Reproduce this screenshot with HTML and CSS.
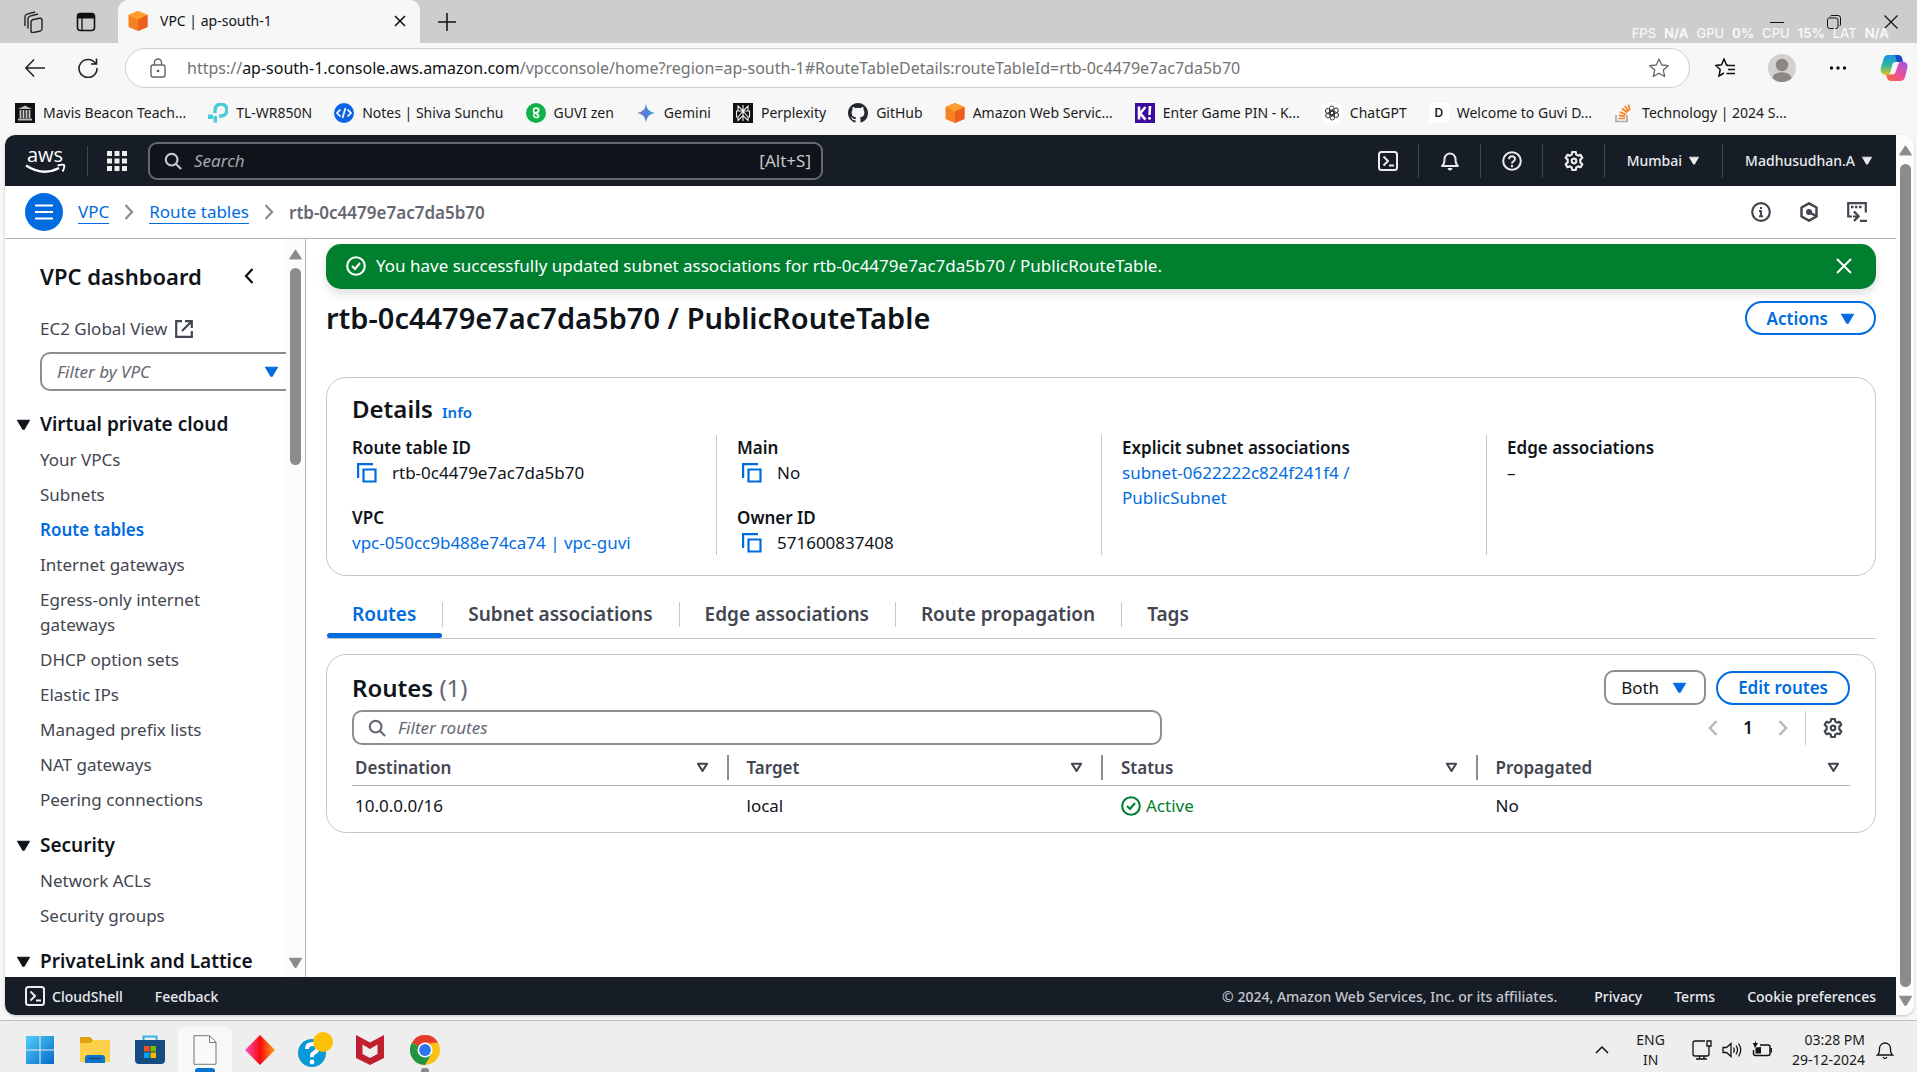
FILE: index.html
```html
<!DOCTYPE html>
<html lang="en">
<head>
<meta charset="utf-8">
<title>VPC | ap-south-1</title>
<link rel="stylesheet" href="styles.css">
</head>
<body>
<svg class="sprite" aria-hidden="true">
  <symbol id="caret" viewBox="0 0 12 10"><path d="M0.5 1h11L6.6 9.4h-1.2z" fill="currentColor" stroke="currentColor" stroke-linejoin="round"/></symbol>
  <symbol id="sort" viewBox="0 0 12 10"><path d="M1.8 1.5h8.4L6 8.2z" fill="none" stroke="currentColor" stroke-width="2" stroke-linejoin="round"/></symbol>
  <symbol id="tri-up" viewBox="0 0 12 10"><path d="M6 1 11.3 9H.7z" fill="currentColor" stroke="currentColor" stroke-linejoin="round"/></symbol>
  <symbol id="search" viewBox="0 0 20 20"><g fill="none" stroke="currentColor" stroke-width="2.4"><circle cx="8.5" cy="8.5" r="6.5"/><path d="m13 13 6 6"/></g></symbol>
  <symbol id="copy" viewBox="0 0 20 20"><g fill="none" stroke="currentColor" stroke-width="2.2"><path d="M1.1 15V1.1H16"/><path d="M6.5 6.5h12v12h-12z"/></g></symbol>
  <symbol id="shell" viewBox="0 0 20 20"><g fill="none" stroke="currentColor" stroke-width="2"><rect x="1" y="1" width="18" height="18" rx="2.5"/><path d="m5.500 5.500 4.500 4.500-4.500 4.500M11 14.500h5"/></g></symbol>
  <symbol id="gear" viewBox="0 0 20 20"><g fill="none" stroke="currentColor" stroke-width="2.2" stroke-linejoin="round"><path d="M8.3 1h3.4l.6 2.6 1.8 1 2.5-.8 1.7 3-2 1.8v2.800l2 1.800-1.700 3-2.500-.8-1.800 1-.6 2.600H8.300l-.6-2.600-1.800-1-2.500.8-1.700-3 2-1.800V8.600l-2-1.800 1.700-3 2.500.8 1.800-1z"/><circle cx="10" cy="10" r="2.300"/></g></symbol>
  <symbol id="ok" viewBox="0 0 20 20"><g fill="none" stroke="currentColor" stroke-width="2.1"><circle cx="10" cy="10" r="8.8"/><path d="m6 10 3 3 5-6"/></g></symbol>
  <symbol id="left" viewBox="0 0 10 16"><path d="M8.5 1 2 8l6.500 7" fill="none" stroke="currentColor" stroke-width="2.300"/></symbol>
  <symbol id="right" viewBox="0 0 10 16"><path d="M1.500 1 8 8l-6.500 7" fill="none" stroke="currentColor" stroke-width="2.300"/></symbol>
  <symbol id="cube" viewBox="0 0 20 20"><path d="M10 0 19.500 4v12L10 20 .5 16V4z" fill="#f58220"/><path d="M10 0 19.500 4 10 8.500.5 4z" fill="#ff9f2b"/><path d="M19.500 4v12L10 20V8.500z" fill="#ee5f1f"/></symbol>
</svg>

<header class="tabstrip">
  <button class="chrome-btn" aria-label="Workspaces"><svg class="i22" viewBox="0 0 22 22"><g fill="none" stroke="#222" stroke-width="1.400"><rect x="9" y="7" width="11" height="13" rx="2.500" transform="skewY(-12) translate(0 4)"/><path d="M6 17.500V8q0-2.200 2-2.800l8-2.200M3 15V6q0-2.200 2-2.800l8-2.200"/></g></svg></button>
  <button class="chrome-btn" aria-label="Tab actions"><svg class="i20" viewBox="0 0 20 20"><rect x="1.500" y="1.500" width="17" height="17" rx="3" fill="none" stroke="#111" stroke-width="1.600"/><path d="M1.500 6.500V4q0-3 3-3h11q3 0 3 3v2.500z" fill="#111"/><path d="M6 6v12" stroke="#111" stroke-width="1.300"/></svg></button>
  <div class="tab">
    <svg class="i20"><use href="#cube"/></svg><span class="tab-title">VPC | ap-south-1</span>
    <button aria-label="Close tab"><svg class="i12" viewBox="0 0 12 12"><path d="m1 1 10 10M11 1 1 11" stroke="#111" stroke-width="1.600"/></svg></button>
  </div>
  <button class="chrome-btn newtab" aria-label="New tab"><svg class="i18" viewBox="0 0 18 18"><path d="M9 0v18M0 9h18" stroke="#111" stroke-width="1.500"/></svg></button>
  <div class="winctl">
    <button aria-label="Minimize"><svg class="i14" viewBox="0 0 14 14"><path d="M0 7.500h14" stroke="#111"/></svg></button>
    <button aria-label="Restore"><svg class="i14" viewBox="0 0 14 14"><g fill="none" stroke="#111"><rect x=".5" y="3" width="10.500" height="10.500" rx="2"/><path d="M3 1.500q.5-1 2-1h6q2.500 0 2.500 2.500v6q0 1.500-1 2"/></g></svg></button>
    <button aria-label="Close"><svg class="i14" viewBox="0 0 14 14"><path d="m.5.5 13 13M13.500.5l-13 13" stroke="#111" stroke-width="1.200"/></svg></button>
  </div>
  <div class="perf"><span>FPS</span><b>N/A</b><span>GPU</span><b>0%</b><span>CPU</span><b>15%</b><span>LAT</span><b>N/A</b></div>
</header>

<div class="toolbar">
  <button class="chrome-btn" aria-label="Back"><svg class="i20" viewBox="0 0 20 20"><path d="M20 10H1M9 1.500.800 10 9 18.500" fill="none" stroke="#222" stroke-width="1.600"/></svg></button>
  <button class="chrome-btn" aria-label="Reload"><svg class="i20" viewBox="0 0 20 20"><path d="M17.500 5.500A9 9 0 1 0 19 10M18.500.5v5.500H13" fill="none" stroke="#222" stroke-width="1.600"/></svg></button>
  <div class="urlbar">
    <svg class="i20" viewBox="0 0 20 20"><g fill="none" stroke="#666" stroke-width="1.400"><rect x="3" y="7" width="14" height="12" rx="2"/><path d="M6.500 7V4.500a3.500 3.500 0 0 1 7 0V7"/></g><circle cx="10" cy="13" r="1.300" fill="#555"/></svg>
    <a class="url" href="#">https://<b>ap-south-1.console.aws.amazon.com</b>/vpcconsole/home?region=ap-south-1#RouteTableDetails:routeTableId=rtb-0c4479e7ac7da5b70</a>
    <button aria-label="Favorite"><svg class="i20" viewBox="0 0 20 20"><path d="m10 1 2.700 6 6.500.700-4.900 4.400 1.400 6.400L10 15.200l-5.700 3.300 1.400-6.400L.8 7.700 7.300 7z" fill="none" stroke="#666" stroke-width="1.300" stroke-linejoin="round"/></svg></button>
  </div>
  <div class="tools">
    <button aria-label="Favorites"><svg class="i20" viewBox="0 0 20 20"><path d="M13 7 11.500 7 9 1 6.500 6.800.8 7.500l4.400 4-1.200 6.500 5-3M12 7.500h8M13 11.500h7M11.500 15.500H20" fill="none" stroke="#111" stroke-width="1.500"/></svg></button>
    <button aria-label="Profile"><svg class="i28" viewBox="0 0 28 28"><defs><clipPath id="av"><circle cx="14" cy="14" r="14"/></clipPath></defs><g clip-path="url(#av)"><rect width="28" height="28" fill="#d3d0cd"/><circle cx="14" cy="11" r="6.200" fill="#8a8785"/><ellipse cx="14" cy="25" rx="10" ry="6.800" fill="#8a8785"/></g></svg></button>
    <button aria-label="More"><svg class="i18" viewBox="0 0 18 18"><g fill="#111"><circle cx="2.500" cy="9" r="1.700"/><circle cx="9" cy="9" r="1.700"/><circle cx="15.500" cy="9" r="1.700"/></g></svg></button>
    <button aria-label="Copilot"><svg class="i28" viewBox="0 0 28 28"><defs><linearGradient id="c1" x2="0" y2="1"><stop offset="0" stop-color="#1595e8"/><stop offset=".5" stop-color="#2ab7a0"/><stop offset="1" stop-color="#e5c51c"/></linearGradient><linearGradient id="c2" x1="1" x2="0" y2="1"><stop offset="0" stop-color="#9a55ee"/><stop offset=".5" stop-color="#ec4f9a"/><stop offset="1" stop-color="#fb6a35"/></linearGradient></defs><path d="M8 1h10q3 0 4 3l1 4h-7q-3 0-3.800 3l-1.700 7q-.8 3-4 3-6 0-6-6L3.500 5Q4.500 1 8 1z" fill="url(#c1)"/><path d="M15 1h3q3 0 4 3l1 4h-6z" fill="#1d46c9"/><path d="M20 27H11q-3 0-4-3l-1-3.500h6q3 0 3.800-3L18 11q.8-3.500 4-3.500 6 0 5.500 6L25 23q-1 4-5 4z" fill="url(#c2)"/></svg></button>
  </div>
</div>

<nav class="bookmarks" aria-label="Favorites bar">
  <a href="#"><svg class="i20" viewBox="0 0 20 20"><rect width="20" height="20" fill="#111"/><path d="M10 2.500 17 6H3zM3 15.500h14v2H3z" fill="#bbb"/><path d="M5.500 7v8M8.500 7v8M11.500 7v8M14.500 7v8" stroke="#ccc" stroke-width="1.700"/></svg>Mavis Beacon Teach...</a>
  <a href="#"><svg class="i20" viewBox="0 0 20 20"><path d="M7 10V7a6 6 0 1 1 6 6h-2" fill="none" stroke="#4acbd6" stroke-width="3.500"/><path d="M0 11.500h5V16H0zM5.500 13H9v6.500H5.500z" fill="#4acbd6"/></svg>TL-WR850N</a>
  <a href="#"><svg class="i20" viewBox="0 0 20 20"><circle cx="10" cy="10" r="10" fill="#0b63e5"/><path d="M6.500 6.500 3 10l3.500 3.500M13.500 6.500 17 10l-3.500 3.500M11.500 5l-3 10" fill="none" stroke="#fff" stroke-width="1.700"/></svg>Notes | Shiva Sunchu</a>
  <a href="#"><svg class="i20" viewBox="0 0 20 20"><circle cx="10" cy="10" r="10" fill="#12b24b"/><g fill="none" stroke="#fff" stroke-width="1.500"><circle cx="10" cy="7.500" r="2.500"/><path d="M12.500 5v3L8 11q-1 3 2 3.500t2.500-2.500L10 11"/></g></svg>GUVI zen</a>
  <a href="#"><svg class="i20" viewBox="0 0 20 20"><defs><linearGradient id="gm"><stop offset="0" stop-color="#8a6fc0"/><stop offset=".6" stop-color="#4a86dc"/><stop offset="1" stop-color="#2ba5e0"/></linearGradient></defs><path d="M10 1q1 8 9 9-8 1-9 9-1-8-9-9 8-1 9-9z" fill="url(#gm)"/></svg>Gemini</a>
  <a href="#"><svg class="i20" viewBox="0 0 20 20"><rect width="20" height="20" fill="#111"/><path d="M10 2v16M5 3l5 5 5-5v5H5zM3.500 8h13v6H15v3.500l-5-5-5 5V14H3.500zM5 14l5-6 5 6" fill="none" stroke="#eee" stroke-width="1.100"/></svg>Perplexity</a>
  <a href="#"><svg class="i20" viewBox="0 0 16 16"><path fill="#24292f" d="M8 0C3.580 0 0 3.580 0 8c0 3.540 2.290 6.530 5.470 7.590.4.070.55-.17.55-.38 0-.19-.01-.82-.01-1.490-2.010.37-2.530-.49-2.690-.94-.09-.23-.48-.94-.82-1.130-.28-.15-.68-.52-.01-.53.63-.01 1.080.58 1.230.82.720 1.210 1.870.87 2.330.66.070-.52.28-.87.51-1.070-1.780-.2-3.640-.89-3.640-3.950 0-.87.31-1.590.82-2.150-.08-.2-.36-1.020.08-2.120 0 0 .67-.21 2.200.82a7.600 7.600 0 0 1 4 0c1.530-1.040 2.200-.82 2.200-.82.44 1.100.16 1.920.08 2.120.51.56.82 1.270.82 2.150 0 3.070-1.870 3.750-3.650 3.950.29.25.54.73.54 1.480 0 1.070-.01 1.930-.01 2.200 0 .21.15.46.55.38A8 8 0 0 0 16 8c0-4.420-3.580-8-8-8z"/></svg>GitHub</a>
  <a href="#"><svg class="i20"><use href="#cube"/></svg>Amazon Web Servic...</a>
  <a href="#"><svg class="i20" viewBox="0 0 20 20"><rect width="20" height="20" fill="#3b0a9e"/><path d="M4 3.500v13M10.500 4 5 10.500l5.500 6M15 3l-.5 9" fill="none" stroke="#fff" stroke-width="2.600"/><circle cx="14.500" cy="15.300" r="1.500" fill="#fff"/></svg>Enter Game PIN - K...</a>
  <a href="#"><svg class="i20" viewBox="0 0 20 20"><rect width="20" height="20" rx="3" fill="#fff"/><g fill="none" stroke="#333" stroke-width=".9"><rect id="pt" x="7.500" y="3" width="4.500" height="9" rx="2.200"/><use href="#pt" transform="rotate(60 10 10)"/><use href="#pt" transform="rotate(120 10 10)"/><use href="#pt" transform="rotate(180 10 10)"/><use href="#pt" transform="rotate(240 10 10)"/><use href="#pt" transform="rotate(300 10 10)"/></g></svg>ChatGPT</a>
  <a href="#"><span class="letter">D</span>Welcome to Guvi D...</a>
  <a href="#"><svg class="i20" viewBox="0 0 20 20"><path d="M2 12v6.500h11V12" fill="none" stroke="#aaa" stroke-width="1.700"/><path d="M4.500 15.500h6.500M4.800 12.300l6.500 1M5.800 9l6.200 2.500M8 5.500l5.300 4M11 3l3.500 5.500M14.500 1.500l1.200 6" stroke="#f48024" stroke-width="1.700"/></svg>Technology | 2024 S...</a>
</nav>

<div class="viewport">
  <div class="page">
    <header class="aws-head">
      <a class="logo" href="#" aria-label="AWS home"><svg viewBox="0 0 40 32"><text x="1" y="17" class="logo-text">aws</text><path d="M0 20.500q17 11 33 2.500" fill="none" stroke="#fff" stroke-width="2.400"/><path d="M31.500 20.500q5.500-1.500 6.500-.5 1 2-1.500 6.500" fill="none" stroke="#fff" stroke-width="1.900"/></svg></a>
      <span class="vline"></span>
      <button class="grid-btn" aria-label="Services"><svg class="i20" viewBox="0 0 20 20"><path d="M0 0h5v5H0zM7.500 0h5v5h-5zM15 0h5v5h-5zM0 7.500h5v5H0zM7.500 7.500h5v5h-5zM15 7.500h5v5h-5zM0 15h5v5H0zM7.500 15h5v5h-5zM15 15h5v5h-5z" fill="#eee"/></svg></button>
      <label class="aws-search"><svg class="i18"><use href="#search"/></svg><input type="search" placeholder="Search" aria-label="Search"><kbd>[Alt+S]</kbd></label>
      <div class="aws-tools">
        <button aria-label="CloudShell"><svg class="i20"><use href="#shell"/></svg></button>
        <button aria-label="Notifications"><svg class="i20" viewBox="0 0 20 20"><path d="M2 15q2.500-2 2.500-7a5.500 5.500 0 0 1 11 0q0 5 2.500 7z" fill="none" stroke="currentColor" stroke-width="2" stroke-linejoin="round"/><path d="M7.500 17h5q-.5 2.500-2.500 2.500T7.500 17z" fill="currentColor"/></svg></button>
        <button aria-label="Help"><svg class="i20" viewBox="0 0 20 20"><circle cx="10" cy="10" r="8.800" fill="none" stroke="currentColor" stroke-width="2"/><path d="M7 8.200Q7 5.200 10 5.200T13 8q0 1.500-1.500 2.300T10 12.500" fill="none" stroke="currentColor" stroke-width="1.900"/><circle cx="10" cy="15" r="1.200" fill="currentColor"/></svg></button>
        <button aria-label="Settings"><svg class="i20"><use href="#gear"/></svg></button>
        <button class="menu">Mumbai <svg class="tri"><use href="#caret"/></svg></button>
        <button class="menu">Madhusudhan.A <svg class="tri"><use href="#caret"/></svg></button>
      </div>
    </header>

    <div class="crumbs">
      <button class="burger" aria-label="Open navigation"><svg class="i18" viewBox="0 0 18 18"><path d="M0 2.500h18M0 9h18M0 15.500h18" stroke="#fff" stroke-width="2"/></svg></button>
      <nav aria-label="Breadcrumb"><a href="#">VPC</a><svg class="chev"><use href="#right"/></svg><a href="#">Route tables</a><svg class="chev"><use href="#right"/></svg><b>rtb-0c4479e7ac7da5b70</b></nav>
      <div class="crumb-tools">
        <button aria-label="Info"><svg class="i20" viewBox="0 0 20 20"><circle cx="10" cy="10" r="8.800" fill="none" stroke="currentColor" stroke-width="2.200"/><path d="M10 8.500v6M10 5v2M8 9h2M8 14.200h4" stroke="currentColor" stroke-width="2"/></svg></button>
        <button aria-label="Amazon Q"><svg class="i20" viewBox="0 0 20 20"><path d="m10 1.300 7.500 4.200v9L10 18.700l-7.500-4.200v-9z" fill="none" stroke="currentColor" stroke-width="2.500" stroke-linejoin="round"/><circle cx="10" cy="10" r="3" fill="currentColor"/><path d="m10 10 7 4" stroke="currentColor" stroke-width="2.500"/></svg></button>
        <button aria-label="Actions recorder"><svg class="i20" viewBox="0 0 20 20"><path d="M5 14.500H1.200V1.200h17.600v9.300M13 18.800h7M6 14.500h6" fill="none" stroke="currentColor" stroke-width="2.200"/><path d="M4 5h2.500M8 5h2.500M12 5h2.500" stroke="currentColor" stroke-width="2.500"/><path d="m7 9.500 4.500 4.800L7 19" fill="none" stroke="currentColor" stroke-width="2.400"/></svg></button>
      </div>
    </div>

    <div class="body">
      <aside class="side">
        <div class="side-main">
          <div class="side-head"><h2>VPC dashboard</h2><button aria-label="Close navigation"><svg class="chev"><use href="#left"/></svg></button></div>
          <a class="global" href="#">EC2 Global View <svg class="i18" viewBox="0 0 18 18"><path d="M7 1.200H1.200v15.600h15.600V11M10 1.200h6.800V8M16.500 1.500 7 11" fill="none" stroke="currentColor" stroke-width="2.200"/></svg></a>
          <div class="vpc-filter"><select aria-label="Filter by VPC"><option>Filter by VPC</option></select><svg class="tri13"><use href="#caret"/></svg></div>
          <h3><svg class="tri13"><use href="#caret"/></svg>Virtual private cloud</h3>
          <ul><li><a href="#">Your VPCs</a></li><li><a href="#">Subnets</a></li><li><a class="on" href="#">Route tables</a></li><li><a href="#">Internet gateways</a></li><li><a href="#">Egress-only internet gateways</a></li><li><a href="#">DHCP option sets</a></li><li><a href="#">Elastic IPs</a></li><li><a href="#">Managed prefix lists</a></li><li><a href="#">NAT gateways</a></li><li><a href="#">Peering connections</a></li></ul>
          <h3><svg class="tri13"><use href="#caret"/></svg>Security</h3>
          <ul><li><a href="#">Network ACLs</a></li><li><a href="#">Security groups</a></li></ul>
          <h3><svg class="tri13"><use href="#caret"/></svg>PrivateLink and Lattice</h3>
        </div>
        <div class="sbar"><svg class="tri13"><use href="#tri-up"/></svg><div class="track"><div class="thumb" style="height:29%"></div></div><svg class="tri13"><use href="#caret"/></svg></div>
      </aside>

      <main>
        <div class="flash" role="status"><svg class="i20"><use href="#ok"/></svg><span>You have successfully updated subnet associations for rtb-0c4479e7ac7da5b70 / PublicRouteTable.</span><button aria-label="Dismiss"><svg class="i16" viewBox="0 0 16 16"><path d="m1 1 14 14M15 1 1 15" stroke="currentColor" stroke-width="2"/></svg></button></div>
        <div class="title-row"><h1>rtb-0c4479e7ac7da5b70 / PublicRouteTable</h1><button class="pill">Actions <svg class="tri13"><use href="#caret"/></svg></button></div>

        <section class="card">
          <h2>Details <a class="info" href="#">Info</a></h2>
          <div class="details">
            <dl><div><dt>Route table ID</dt><dd><button class="copy" aria-label="Copy"><svg class="i20"><use href="#copy"/></svg></button>rtb-0c4479e7ac7da5b70</dd></div><div><dt>VPC</dt><dd><a href="#">vpc-050cc9b488e74ca74 | vpc-guvi</a></dd></div></dl>
            <dl><div><dt>Main</dt><dd><button class="copy" aria-label="Copy"><svg class="i20"><use href="#copy"/></svg></button>No</dd></div><div><dt>Owner ID</dt><dd><button class="copy" aria-label="Copy"><svg class="i20"><use href="#copy"/></svg></button>571600837408</dd></div></dl>
            <dl><div><dt>Explicit subnet associations</dt><dd><a href="#">subnet-0622222c824f241f4 /<br>PublicSubnet</a></dd></div></dl>
            <dl><div><dt>Edge associations</dt><dd>–</dd></div></dl>
          </div>
        </section>

        <div class="tabs" role="tablist"><button role="tab" class="on" aria-selected="true">Routes</button><button role="tab">Subnet associations</button><button role="tab">Edge associations</button><button role="tab">Route propagation</button><button role="tab">Tags</button></div>

        <section class="card routes">
          <div class="routes-head"><h2>Routes <span>(1)</span></h2><div class="both"><select aria-label="Route source"><option>Both</option></select><svg class="tri13"><use href="#caret"/></svg></div><button class="pill">Edit routes</button></div>
          <div class="routes-tools">
            <label class="filter"><svg class="i18"><use href="#search"/></svg><input type="search" placeholder="Filter routes" aria-label="Filter routes"></label>
            <div class="pager"><button aria-label="Previous page"><svg class="chev"><use href="#left"/></svg></button><b>1</b><button aria-label="Next page"><svg class="chev"><use href="#right"/></svg></button></div>
            <button class="prefs" aria-label="Preferences"><svg class="i20"><use href="#gear"/></svg></button>
          </div>
          <table>
            <thead><tr><th><div>Destination<svg class="tri13"><use href="#sort"/></svg></div></th><th><div>Target<svg class="tri13"><use href="#sort"/></svg></div></th><th><div>Status<svg class="tri13"><use href="#sort"/></svg></div></th><th><div>Propagated<svg class="tri13"><use href="#sort"/></svg></div></th></tr></thead>
            <tbody><tr><td>10.0.0.0/16</td><td>local</td><td><span class="status"><svg class="i20"><use href="#ok"/></svg>Active</span></td><td>No</td></tr></tbody>
          </table>
        </section>
      </main>
    </div>

    <footer class="aws-foot">
      <button><svg class="i20"><use href="#shell"/></svg>CloudShell</button><a href="#">Feedback</a>
      <span class="copyr">© 2024, Amazon Web Services, Inc. or its affiliates.</span><a href="#">Privacy</a><a href="#">Terms</a><a href="#">Cookie preferences</a>
    </footer>
  </div>
  <div class="sbar outer"><svg class="tri13"><use href="#tri-up"/></svg><div class="track"><div class="thumb"></div></div><svg class="tri13"><use href="#caret"/></svg></div>
</div>

<footer class="taskbar">
  <div class="apps">
    <button aria-label="Start"><svg class="i30" viewBox="0 0 30 30"><defs><linearGradient id="w" x2="1" y2="1"><stop offset="0" stop-color="#4fd0fb"/><stop offset="1" stop-color="#0568c8"/></linearGradient></defs><path d="M1 1h13.500v13.500H1zM15.500 1H29v13.500H15.500zM1 15.500h13.500V29H1zM15.500 15.500H29V29H15.500z" fill="url(#w)"/></svg></button>
    <button aria-label="File Explorer"><svg class="i30" viewBox="0 0 30 30"><path d="M0 2h10l3 3v5H0z" fill="#e0a010"/><path d="M0 8h10l4-3h16v22H0z" fill="#fdd04a"/><path d="M5 28v-5q0-3 3-3h14q3 0 3 3v5z" fill="#0d72c8"/><path d="M9 23.500h12" stroke="#044f91" stroke-width="1.500"/></svg></button>
    <button aria-label="Store"><svg class="i30" viewBox="0 0 30 30"><path d="M8.500 6V1.500h13V6" fill="none" stroke="#31b5ee" stroke-width="2"/><path d="M0 5h30v20q0 4-4 4H4q-4 0-4-4z" fill="#174c80"/><path d="M9 11h5.500v5.500H9z" fill="#f25022"/><path d="M15.500 11H21v5.500h-5.500z" fill="#7fba00"/><path d="M9 17.500h5.500V23H9z" fill="#00a4ef"/><path d="M15.500 17.500H21V23h-5.500z" fill="#ffb900"/></svg></button>
    <button class="active" aria-label="Document"><svg class="i30" viewBox="0 0 30 30"><path d="M4 .7h15.500L26 7v22.300H4z" fill="#fafafa" stroke="#777"/><path d="M19.500 1v6.500H26" fill="none" stroke="#777"/></svg></button>
    <button aria-label="Game"><svg class="i30" viewBox="0 0 30 30"><defs><linearGradient id="d"><stop offset="0" stop-color="#ff4fc0"/><stop offset=".5" stop-color="#f80b10"/><stop offset="1" stop-color="#ffa01a"/></linearGradient></defs><path d="M15 0 30 15 15 30 0 15z" fill="url(#d)"/></svg></button>
    <button aria-label="Help"><svg class="i36" viewBox="0 0 36 36"><circle cx="15" cy="21" r="14" fill="#0899d6"/><path d="M10 17q0-5 5.500-5t5 4.500q0 2.500-3 4t-2.500 4.500" fill="none" stroke="#fff" stroke-width="4"/><circle cx="15" cy="30" r="2.400" fill="#fff"/><circle cx="26" cy="10" r="10" fill="#ffc107"/></svg></button>
    <button aria-label="McAfee"><svg class="i30" viewBox="0 0 30 30"><path d="m1 0 14 7.500L29 0v23l-14 7L1 23zM7.500 9.500v9.500l7.500 4 7.500-4V9.500L15 14z" fill="#c01f2e" fill-rule="evenodd"/></svg></button>
    <button class="running" aria-label="Chrome"><svg class="i30" viewBox="0 0 30 30"><circle cx="15" cy="15" r="15" fill="#fbc116"/><path d="M2 7.500a15 15 0 0 1 26 0H15v7z" fill="#e33b2e"/><path d="M2 7.500A15 15 0 0 0 15 30l6.500-11.300L8.500 18.700z" fill="#229342"/><path d="M2 7.500 8.500 18.700 15 15z" fill="#229342"/><path d="M15 7.500h13L15 9z" fill="#e33b2e"/><circle cx="15" cy="15" r="7.500" fill="#fff"/><circle cx="15" cy="15" r="5.900" fill="#2b74ee"/></svg></button>
  </div>
  <div class="tray">
    <button aria-label="Show hidden icons"><svg class="i14" viewBox="0 0 14 14"><path d="m1 10 6-6 6 6" fill="none" stroke="#111" stroke-width="1.500"/></svg></button>
    <button class="lang">ENG<br>IN</button>
    <button class="sys" aria-label="Network, volume, battery"><svg class="i20" viewBox="0 0 20 20"><path d="M13 1H3Q1 1 1 3v11q0 2 2 2h12q2 0 2-2V9M4 19h11M7.500 16v3M12 16v3M15 1h4v5h-4zM17 6v3" fill="none" stroke="#111" stroke-width="1.300"/></svg><svg class="i20" viewBox="0 0 20 20"><path d="M1 7.500h3.500L9 3.500v13l-4.500-4H1zM11.500 7.500q1.500 2.500 0 5M14 5.500q3 4.500 0 9M16.500 3.500q4.500 6.500 0 13" fill="none" stroke="#111" stroke-width="1.300"/></svg><svg class="i20" viewBox="0 0 20 20"><path d="M8 5h8q2 0 2 2v6.500q0 2-2 2H3.500q-2 0-2-2V10" fill="none" stroke="#111" stroke-width="1.500"/><path d="M18.500 8H20v4.500h-1.500zM3.500 7.500 9 7v6.500H3.500zM3 0v3H.8L3 8l3-5H4z" fill="#111"/></svg></button>
    <time>03:28 PM<br>29-12-2024</time>
    <button aria-label="Notifications"><svg class="i18" viewBox="0 0 18 18"><path d="M1.500 14q2-1.500 2-6.500a5.500 5.500 0 0 1 11 0q0 5 2 6.500zM7 16q2 3 4 0" fill="none" stroke="#111" stroke-width="1.300"/></svg></button>
  </div>
</footer>
</body>
</html>
```
FILE: styles.css
```css
* { box-sizing: border-box; }
body {
  margin: 0; height: 100vh; display: flex; flex-direction: column; overflow: hidden;
  background: #f7f7f7; color: #0f141a;
  font: 17px/25px "Noto Sans", "Open Sans", sans-serif;
}
button, input, select { font: inherit; color: inherit; background: none; border: 0; padding: 0; margin: 0; outline: 0; }
button { display: flex; align-items: center; justify-content: center; }
a { color: inherit; text-decoration: none; }
h1, h2, h3, ul, dl, dd { margin: 0; padding: 0; }
ul { list-style: none; }
b, h1, h2, h3, dt, th { font-weight: 600; }
svg { flex: none; display: block; }
.sprite { position: absolute; width: 0; height: 0; }
.i12 { width: 12px; height: 12px; }
.i14 { width: 14px; height: 14px; }
.i16 { width: 16px; height: 16px; }
.i18 { width: 18px; height: 18px; }
.i20 { width: 20px; height: 20px; }
.i22 { width: 22px; height: 22px; }
.i28 { width: 28px; height: 28px; }
.i30 { width: 30px; height: 30px; }
.i36 { width: 36px; height: 36px; }
.tri { width: 10px; height: 9px; }
.tri13 { width: 13px; height: 11px; }
.chev { width: 10px; height: 16px; }

/* browser chrome */
.tabstrip { flex: none; position: relative; height: 43px; display: flex; align-items: center; background: #cdcdcd; padding-left: 6px; font-size: 14px; }
.chrome-btn { width: 53px; height: 40px; }
.tab { align-self: stretch; width: 302px; margin-left: 6px; padding: 0 14px 2px 10px; display: flex; align-items: center; gap: 12px; background: #f7f7f7; border-radius: 10px 10px 0 0; }
.tab-title { flex: 1; }
.winctl { margin-left: auto; display: flex; padding-right: 19px; gap: 43px; }
.perf { position: absolute; right: 28px; top: 24px; display: flex; gap: 8px; font: 500 13px/18px Inter, sans-serif; color: #f7f7f7; white-space: nowrap; }
.perf b { font-weight: 700; }
.toolbar { flex: none; height: 50px; display: flex; align-items: center; padding: 0 0 0 8px; }
.urlbar { flex: 1; height: 40px; margin-left: 11px; padding: 0 20px 0 22px; display: flex; align-items: center; background: #fff; border: 1px solid #cfcfcf; border-radius: 20px; }
.url { flex: 1; margin-left: 19px; font-size: 16px; color: #737373; white-space: nowrap; }
.url b { font-weight: 400; color: #111; }
.tools { display: flex; align-items: center; padding: 0 9px 0 25px; gap: 33px; }
.bookmarks { flex: none; height: 42px; display: flex; align-items: center; gap: 22px; padding: 0 15px 3px; font-size: 14px; color: #1b1b1b; white-space: nowrap; }
.bookmarks a { display: flex; align-items: center; gap: 8px; }
.letter { width: 20px; height: 20px; border-radius: 3px; background: #fff; font: 600 12px/20px Inter, sans-serif; text-align: center; }

/* page frame */
.viewport { flex: 1; min-height: 0; display: flex; margin: 0 3px 5px 5px; background: #fcfcfc; border-radius: 10px; overflow: hidden; box-shadow: 0 1px 3px #0003; }
.page { flex: 1; min-width: 0; display: flex; flex-direction: column; background: #fff; }
.sbar { flex: none; width: 19px; display: flex; flex-direction: column; align-items: center; background: #fcfcfc; color: #8b8b8b; padding: 10px 0 9px; }
.track { flex: 1; width: 11px; margin: 8px 0; }
.thumb { height: 100%; border-radius: 6px; background: #8b8b8b; }

.aws-head { flex: none; height: 51px; display: flex; align-items: center; background: #161d26; color: #e9ebed; font-size: 14px; }
.logo svg { width: 40px; height: 32px; margin-left: 21px; overflow: visible; }
.logo-text { font: 500 20px "Open Sans", sans-serif; fill: #fff; }
.vline { width: 1px; height: 30px; margin-left: 21px; background: #424650; }
.grid-btn { margin: 0 21px 0 19px; }
.aws-search { flex: 0 1 675px; height: 38px; display: flex; align-items: center; gap: 12px; padding: 0 10px 0 14px; background: #0f141a; border: 2px solid #656871; border-radius: 9px; color: #c6c6cd; }
.aws-search input { flex: 1; min-width: 0; }
.aws-search input, .aws-search kbd { font-family: inherit; font-size: 17px; }
input::placeholder { color: #a4a4ad; opacity: 1; font-style: italic; }
.aws-tools { margin-left: auto; display: flex; align-items: center; }
.aws-tools button { height: 34px; padding: 0 20px 0 21px; border-right: 1px solid #424650; }
.aws-tools .menu { gap: 7px; padding: 0 23px 0 22px; font-weight: 500; }
.aws-tools .menu:last-child { border: 0; padding-right: 24px; }

.crumbs { flex: none; height: 53px; display: flex; align-items: center; padding: 0 29px 0 20px; border-bottom: 1px solid #b4b4bb; }
.burger { width: 38px; height: 38px; border-radius: 50%; background: #006ce0; }
.crumbs nav { display: flex; align-items: center; gap: 15px; margin-left: 15px; color: #8c8c94; }
.crumbs nav a { color: #006ce0; border-bottom: 1px solid; line-height: 22px; }
.crumbs nav b { color: #656871; }
.crumb-tools { margin-left: auto; display: flex; gap: 28px; color: #424650; }

.body { flex: 1; min-height: 0; display: flex; }
.side { flex: none; width: 301px; display: flex; border-right: 1px solid #b4b4bb; color: #424650; }
.side-main { flex: 1; min-width: 0; overflow: hidden; padding: 22px 0 0 35px; }
.side-head { display: flex; align-items: center; justify-content: space-between; padding-right: 32px; color: #0f141a; }
.side-head h2 { font-size: 22px; line-height: 30px; }
.global { display: flex; align-items: center; gap: 8px; margin: 25px 0 11px; }
.vpc-filter, .both { display: grid; grid-template-columns: 100%; align-items: center; }
.vpc-filter select, .both select { grid-area: 1 / 1; appearance: none; border: 2px solid #8c8c94; border-radius: 10px; }
.vpc-filter svg, .both svg { grid-area: 1 / 1; justify-self: end; color: #006ce0; pointer-events: none; }
.vpc-filter select { width: 290px; height: 39px; padding-left: 15px; font-style: italic; color: #656871; }
.vpc-filter svg { margin-right: 8px; }
.side h3 { display: flex; align-items: center; gap: 10px; margin: 21px 0 10px -23px; font-size: 19px; line-height: 25px; color: #0f141a; white-space: nowrap; }
.side li { margin-bottom: 10px; padding-right: 50px; }
.side .on { color: #006ce0; font-weight: 600; }

main { flex: 1; min-width: 0; padding: 5px 20px; }
.flash { height: 45px; display: flex; align-items: center; gap: 10px; padding: 0 24px 2px 20px; background: #00802f; color: #fff; border-radius: 15px; box-shadow: 0 5px 10px #0f141a22; }
.flash span { flex: 1; }
.title-row { display: flex; align-items: center; justify-content: space-between; margin: 10px 0 40px; }
h1 { font-size: 29px; line-height: 38px; }
.pill { height: 34px; padding: 0 20px; gap: 13px; border: 2px solid #006ce0; border-radius: 17px; color: #006ce0; font-weight: 600; }
.card { border: 1px solid #c6c6cd; border-radius: 20px; padding: 16px 25px 20px; }
.card h2 { font-size: 24px; line-height: 30px; }
.info { font-size: 15px; color: #006ce0; margin-left: 3px; }
.details { display: grid; grid-template-columns: repeat(4, 1fr); gap: 21px; margin: 8px 0 0 -21px; }
.details dl { border-left: 1px solid #c6c6cd; padding-left: 20px; display: grid; gap: 20px; align-content: start; }
.details dl:first-child { border-color: transparent; }
.details dd { display: flex; }
.details a, .copy { color: #006ce0; }
.copy { padding: 0 15px 0 5px; }

.tabs { display: flex; margin-top: 17px; border-bottom: 1px solid #c6c6cd; padding-bottom: 2px; }
.tabs button { position: relative; height: 43px; padding: 0 26px; font-size: 19px; font-weight: 600; color: #424650; }
.tabs button + button::before { content: ""; position: absolute; left: 0; top: 9px; height: 25px; border-left: 1px solid #c6c6cd; }
.tabs .on { color: #006ce0; }
.tabs .on::after { content: ""; position: absolute; left: 1px; right: 0; bottom: -2px; height: 5px; border-radius: 3px; background: #006ce0; }

.routes { margin-top: 15px; padding: 15px 25px 7px; }
.routes-head { display: flex; align-items: center; gap: 10px; }
.routes-head h2 { flex: 1; }
.routes-head h2 span { font-weight: 400; color: #656871; }
.both select { width: 102px; height: 35px; padding-left: 15px; }
.both svg { margin-right: 20px; }
.routes-tools { display: flex; align-items: center; margin-top: 5px; }
.filter { flex: 0 1 810px; height: 35px; display: flex; align-items: center; gap: 12px; padding: 0 14px; border: 2px solid #8c8c94; border-radius: 10px; color: #656871; }
.filter input { flex: 1; min-width: 0; }
.filter input::placeholder { color: #656871; }
.pager { margin-left: auto; display: flex; align-items: center; gap: 25px; color: #b4b4bb; }
.pager b { color: #0f141a; }
.prefs { height: 34px; margin-left: 17px; padding: 0 7px 0 17px; border-left: 1px solid #c6c6cd; color: #424650; }
table { width: 100%; margin-top: 5px; border-collapse: collapse; table-layout: fixed; text-align: left; }
th { padding: 5px 0; border-bottom: 1px solid #b4b4bb; color: #424650; }
th div { display: flex; align-items: center; justify-content: space-between; height: 25px; padding: 0 18px; border-left: 2px solid #8c8c94; }
th:first-child div { border-left: 0; padding-left: 3px; }
th:last-child div { padding-right: 10px; }
td { padding: 7px 0 7px 20px; }
td:first-child { padding-left: 3px; }
.status { display: flex; align-items: center; gap: 5px; color: #00802f; }

.aws-foot { flex: none; height: 38px; display: flex; align-items: center; gap: 32px; padding: 0 20px; background: #161d26; color: #ebebf0; font-size: 14px; font-weight: 500; }
.aws-foot button { gap: 7px; }
.copyr { margin-left: auto; margin-right: 5px; color: #c6c6cd; }
.outer { width: 18px; }

/* taskbar */
.taskbar { flex: none; height: 52px; display: flex; justify-content: space-between; background: #eee; border-top: 1px solid #bdbdbd; color: #1b1b1b; font-size: 14px; line-height: 20px; padding: 0 23px 0 13px; }
.apps { display: flex; padding-top: 6px; gap: 1px; }
.apps button { position: relative; width: 54px; }
.apps .active { background: #f8f8f8; border-radius: 6px 6px 0 0; }
.active::after, .running::after { content: ""; position: absolute; bottom: 0; width: 20px; height: 4px; border-radius: 3px 3px 0 0; background: #0873d2; }
.running::after { width: 8px; background: #8b8b8b; }
.tray { display: flex; align-items: center; gap: 20px; padding-top: 6px; }
.lang { margin: 0 7px; }
.sys { gap: 10px; }
.tray time { text-align: right; }
.tray time + button { margin-left: -9px; }
```
